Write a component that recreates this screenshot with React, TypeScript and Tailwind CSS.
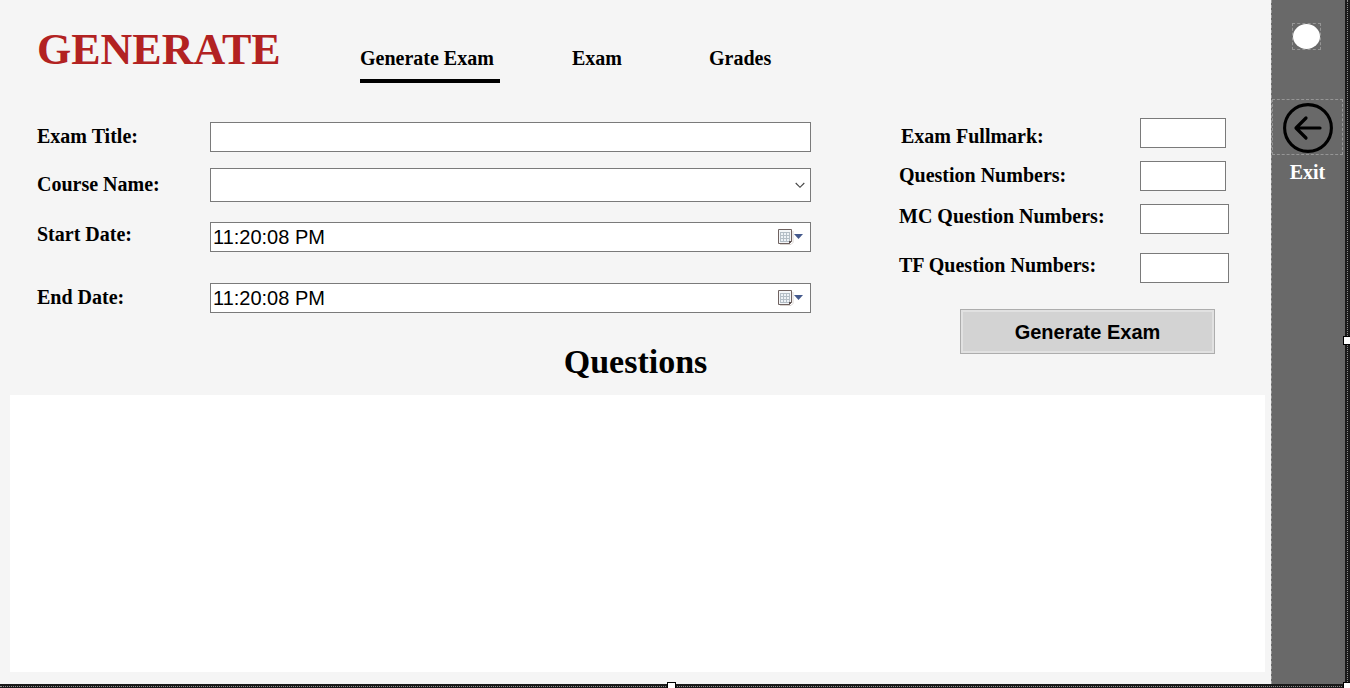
import { useState, type ReactNode } from "react";

const labelText = "font-['Liberation_Serif',serif] text-xl leading-6 font-bold text-black";
const box = "border border-[#7a7a7a] bg-white font-['Liberation_Sans',sans-serif] text-xl text-black";

function CalendarIcon() {
  return (
    <svg width="27" height="17" viewBox="0 0 27 17" aria-hidden="true">
      <path d="M2 15.5h11l2-2V2" fill="none" stroke="#d9d4d0" />
      <path d="M.5.5h13v12l-2 2H.5z" fill="#f4f6f8" stroke="#6f6260" />
      <rect x="2" y="3" width="10" height="10" fill="#b4bec6" />
      <path
        d="M3 4h2v2H3zM6 4h2v2H6zM9 4h2v2H9zM3 7h2v2H3zM6 7h2v2H6zM9 7h2v2H9zM3 10h2v2H3zM6 10h2v2H6zM9 10h2v2H9z"
        fill="#eef2f6"
      />
      <path d="M11 15v-3h3z" fill="#5a4c4c" />
      <path d="M16 5h9l-4.5 5z" fill="#44598c" />
    </svg>
  );
}

function FieldRow({ id, label, className = "", labelClass = "", children }: {
  id: string;
  label: string;
  className?: string;
  labelClass?: string;
  children: ReactNode;
}) {
  return (
    <div className={`flex items-start ${className}`}>
      <label htmlFor={id} className={`w-[173px] shrink-0 ${labelText} ${labelClass}`}>
        {label}
      </label>
      {children}
    </div>
  );
}

function TimePicker({ id, name }: { id: string; name: string }) {
  const [value, setValue] = useState("11:20:08 PM");
  return (
    <div className={`flex h-[30px] min-w-0 flex-1 items-center ${box}`}>
      <input
        id={id}
        value={value}
        onChange={(e) => setValue(e.target.value)}
        className="h-7 min-w-0 flex-1 bg-transparent pl-0.5 outline-none"
      />
      <button type="button" aria-label={`Pick ${name}`} className="mr-[5px] shrink-0">
        <CalendarIcon />
      </button>
    </div>
  );
}

function NumberRow({ id, label, className = "", labelClass = "", width }: {
  id: string;
  label: string;
  className?: string;
  labelClass?: string;
  width: string;
}) {
  return (
    <div className={`flex items-start ${className}`}>
      <label htmlFor={id} className={`w-[241px] shrink-0 ${labelText} ${labelClass}`}>
        {label}
      </label>
      <input id={id} inputMode="numeric" className={`h-[30px] px-1 ${width} ${box}`} />
    </div>
  );
}

export default function App() {
  return (
    <div className="flex min-h-screen flex-col bg-[#f5f5f5]">
      <div className="flex flex-1">
        <main className="flex min-w-0 flex-1 flex-col">
          <header className="flex items-start pt-[26px] pl-[37px]">
            <h1 className="w-[323px] shrink-0 font-['Liberation_Serif',serif] text-[44px] leading-12 font-bold text-[#b22222]">
              GENERATE
            </h1>
            <nav className={`grid grid-cols-[212px_137px_auto] items-start pt-5 ${labelText}`}>
              <a href="#generate" className="w-[140px] border-b-4 border-black pb-[9px]">
                Generate Exam
              </a>
              <a href="#exam">Exam</a>
              <a href="#grades">Grades</a>
            </nav>
          </header>

          <form className="flex items-start gap-[88px] pt-[35px] pr-[42px] pl-[37px]" onSubmit={(e) => e.preventDefault()}>
            <div className="min-w-0 flex-1 pt-1">
              <FieldRow id="title" label="Exam Title:" labelClass="pt-0.5">
                <input id="title" className={`h-[30px] min-w-0 flex-1 px-1 ${box}`} />
              </FieldRow>
              <FieldRow id="course" label="Course Name:" className="mt-4" labelClass="pt-1">
                <div className="relative min-w-0 flex-1">
                  <select id="course" className={`block h-[34px] w-full appearance-none px-1 outline-none ${box}`}>
                    <option value=""></option>
                  </select>
                  <svg className="pointer-events-none absolute top-3.5 right-1.5" width="10" height="7" viewBox="0 0 10 7" aria-hidden="true">
                    <path d="M.7 1 5 5.3 9.3 1" fill="none" stroke="#444" strokeWidth="1.1" />
                  </svg>
                </div>
              </FieldRow>
              <FieldRow id="start" label="Start Date:" className="mt-5">
                <TimePicker id="start" name="start date" />
              </FieldRow>
              <FieldRow id="end" label="End Date:" className="mt-[31px]" labelClass="pt-0.5">
                <TimePicker id="end" name="end date" />
              </FieldRow>
            </div>

            <div className="w-[330px] shrink-0">
              <NumberRow id="fullmark" label="Exam Fullmark:" labelClass="pt-1.5 pl-0.5" width="w-[86px]" />
              <NumberRow id="questions" label="Question Numbers:" className="mt-[13px]" labelClass="pt-0.5" width="w-[86px]" />
              <NumberRow id="mc" label="MC Question Numbers:" className="mt-[13px]" width="w-[89px]" />
              <NumberRow id="tf" label="TF Question Numbers:" className="mt-[19px]" width="w-[89px]" />
              <button
                type="submit"
                className="mt-[26px] ml-[61px] block h-[45px] w-[255px] border border-[#adadad] bg-[#d3d3d3] font-['Liberation_Sans',sans-serif] text-xl font-bold text-black ring-2 ring-[#e1e1e1] ring-inset"
              >
                Generate Exam
              </button>
            </div>
          </form>

          <h2 className="-mt-3 text-center font-['Liberation_Serif',serif] text-[34px] leading-10 font-bold text-black">
            Questions
          </h2>
          <section aria-label="Questions" className="mt-[13px] mr-1.5 mb-3 ml-2.5 flex-1 bg-white" />
        </main>

        <aside className="flex w-[74px] shrink-0 flex-col items-center border-l border-dashed border-[#9a9a9a] bg-[#696969] pt-[23px]">
          <div className="mr-1 flex h-[27px] w-[29px] items-center justify-center border border-dashed border-[#969696]">
            <svg className="shrink-0" width="27" height="25" viewBox="0 0 27 25" aria-hidden="true">
              <ellipse cx="13.5" cy="12.5" rx="13.5" ry="12.5" fill="#fff" />
            </svg>
          </div>
          <button type="button" className="mt-[49px] mr-0.5 flex w-[71px] flex-col items-center">
            <span className="flex h-14 w-full items-end justify-center border border-dashed border-[#969696] pb-px">
              <svg width="50" height="50" viewBox="0 0 50 50" fill="none" stroke="#000" strokeLinecap="round" aria-hidden="true">
                <circle cx="25" cy="25" r="23.4" strokeWidth="3.1" />
                <path d="M37 25H13.5M23 15 13 25l10 10" strokeWidth="3.2" strokeLinejoin="round" />
              </svg>
            </span>
            <span className="mt-[5px] font-['Liberation_Serif',serif] text-xl leading-6 font-bold text-white">Exit</span>
          </button>
        </aside>

        <div className="relative flex w-[5px] shrink-0 justify-center bg-[#1a1a1a]">
          <div className="border-l border-dotted border-[#8c8c8c]" />
          <div className="absolute top-1/2 right-0 h-[9px] w-[7px] -translate-y-1.5 border border-r-0 border-black bg-white" />
        </div>
      </div>

      <div className="relative flex h-1 items-center bg-[#1a1a1a]">
        <div className="w-full border-t border-dotted border-[#8c8c8c]" />
        <div className="absolute bottom-0 left-1/2 -ml-2 h-1.5 w-[9px] border border-b-0 border-black bg-white" />
        <div className="absolute right-0 bottom-0 h-1.5 w-[7px] border-t border-l border-black bg-white" />
      </div>
    </div>
  );
}
